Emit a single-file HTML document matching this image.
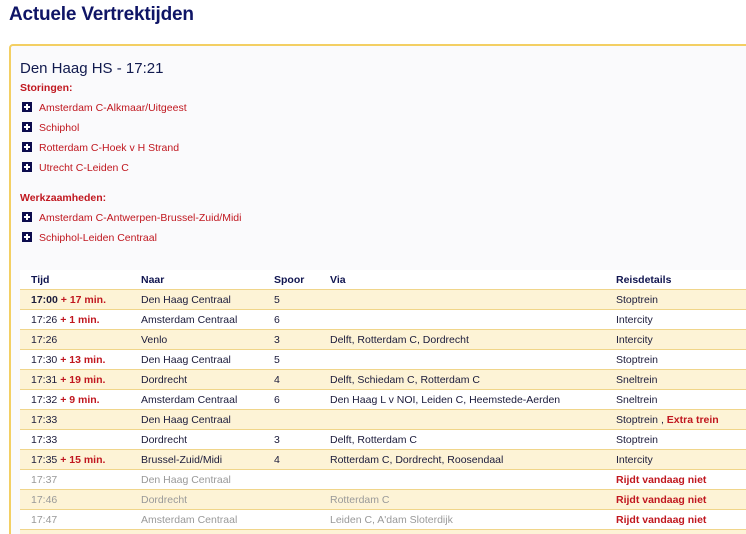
<!DOCTYPE html>
<html style="height:534px;overflow:hidden"><head><style>
body{margin:0;background:#fff;font-family:"Liberation Sans",Arial,sans-serif;width:746px;height:534px;overflow:hidden;position:relative}
h1{position:absolute;left:9px;top:4px;margin:0;font-size:19px;color:#0f1566;font-weight:bold;letter-spacing:-0.2px}
.box{position:absolute;left:9px;top:44px;width:760px;height:520px;border:2px solid #f3cf63;border-radius:4px;background:#fafafc}
.st{position:absolute;left:20px;top:60px;font-size:15px;color:#111a4e}
.lbl{position:absolute;left:20px;font-size:10.5px;font-weight:bold;color:#c0171f}
.it{position:absolute;left:22px;font-size:10.5px;color:#c0171f;height:12px;line-height:12px}
.it i{display:inline-block;width:10px;height:10px;background:#0c0c4e;position:relative;vertical-align:-1px;margin-right:7px}
.it i:before{content:"";position:absolute;left:4px;top:2px;width:2px;height:6px;background:#fff}
.it i:after{content:"";position:absolute;left:2px;top:4px;width:6px;height:2px;background:#fff}
table{position:absolute;left:20px;top:270px;width:740px;border-collapse:collapse;font-size:10.5px;color:#1a1a3a}
td,th{height:19px;line-height:12px;padding:0 0 0 11px;text-align:left;border-bottom:1px solid #f0d58a;white-space:nowrap}
th{background:#fff;color:#101550;font-weight:bold}
tr.y td{background:#fdf3d6}
tr.w td{background:#fff}
.r{color:#c0171f;font-weight:bold}
tr.g td{color:#999}
</style></head><body>
<h1>Actuele Vertrektijden</h1>
<div class="box"></div>
<div class="st">Den Haag HS - 17:21</div>
<div class="lbl" style="top:82px">Storingen:</div>
<div class="it" style="top:102px"><i></i>Amsterdam C-Alkmaar/Uitgeest</div>
<div class="it" style="top:122px"><i></i>Schiphol</div>
<div class="it" style="top:142px"><i></i>Rotterdam C-Hoek v H Strand</div>
<div class="it" style="top:162px"><i></i>Utrecht C-Leiden C</div>
<div class="lbl" style="top:192px">Werkzaamheden:</div>
<div class="it" style="top:212px"><i></i>Amsterdam C-Antwerpen-Brussel-Zuid/Midi</div>
<div class="it" style="top:232px"><i></i>Schiphol-Leiden Centraal</div>
<table>
<colgroup><col style="width:110px"><col style="width:133px"><col style="width:56px"><col style="width:286px"><col></colgroup>
<tr><th>Tijd</th><th>Naar</th><th>Spoor</th><th>Via</th><th>Reisdetails</th></tr>
<tr class="y"><td><b>17:00</b> <span class="r">+ 17 min.</span></td><td>Den Haag Centraal</td><td>5</td><td></td><td>Stoptrein</td></tr>
<tr class="w"><td>17:26 <span class="r">+ 1 min.</span></td><td>Amsterdam Centraal</td><td>6</td><td></td><td>Intercity</td></tr>
<tr class="y"><td>17:26</td><td>Venlo</td><td>3</td><td>Delft, Rotterdam C, Dordrecht</td><td>Intercity</td></tr>
<tr class="w"><td>17:30 <span class="r">+ 13 min.</span></td><td>Den Haag Centraal</td><td>5</td><td></td><td>Stoptrein</td></tr>
<tr class="y"><td>17:31 <span class="r">+ 19 min.</span></td><td>Dordrecht</td><td>4</td><td>Delft, Schiedam C, Rotterdam C</td><td>Sneltrein</td></tr>
<tr class="w"><td>17:32 <span class="r">+ 9 min.</span></td><td>Amsterdam Centraal</td><td>6</td><td>Den Haag L v NOI, Leiden C, Heemstede-Aerden</td><td>Sneltrein</td></tr>
<tr class="y"><td>17:33</td><td>Den Haag Centraal</td><td></td><td></td><td>Stoptrein , <span class="r">Extra trein</span></td></tr>
<tr class="w"><td>17:33</td><td>Dordrecht</td><td>3</td><td>Delft, Rotterdam C</td><td>Stoptrein</td></tr>
<tr class="y"><td>17:35 <span class="r">+ 15 min.</span></td><td>Brussel-Zuid/Midi</td><td>4</td><td>Rotterdam C, Dordrecht, Roosendaal</td><td>Intercity</td></tr>
<tr class="w g"><td>17:37</td><td>Den Haag Centraal</td><td></td><td></td><td><span class="r">Rijdt vandaag niet</span></td></tr>
<tr class="y g"><td>17:46</td><td>Dordrecht</td><td></td><td>Rotterdam C</td><td><span class="r">Rijdt vandaag niet</span></td></tr>
<tr class="w g"><td>17:47</td><td>Amsterdam Centraal</td><td></td><td>Leiden C, A'dam Sloterdijk</td><td><span class="r">Rijdt vandaag niet</span></td></tr>
<tr class="y"><td></td><td></td><td></td><td></td><td></td></tr>
</table>
</body></html>
